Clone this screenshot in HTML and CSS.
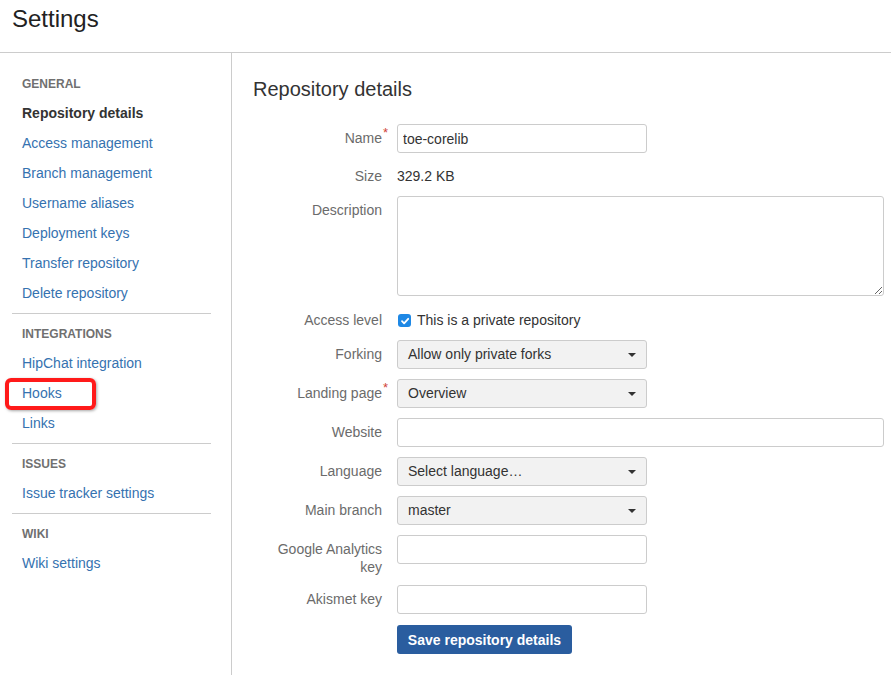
FILE: index.html
```html
<!DOCTYPE html>
<html>
<head>
<meta charset="utf-8">
<link rel="stylesheet" href="styles.css">
</head>
<body>
<header class="page-header">
  <h1>Settings</h1>
</header>
<div class="layout">
  <nav class="sidebar">
    <div class="nav-heading">GENERAL</div>
    <a class="nav-item active">Repository details</a>
    <a class="nav-item">Access management</a>
    <a class="nav-item">Branch management</a>
    <a class="nav-item">Username aliases</a>
    <a class="nav-item">Deployment keys</a>
    <a class="nav-item">Transfer repository</a>
    <a class="nav-item">Delete repository</a>
    <hr class="nav-sep">
    <div class="nav-heading">INTEGRATIONS</div>
    <a class="nav-item">HipChat integration</a>
    <a class="nav-item highlighted">Hooks<span class="highlight-box"></span></a>
    <a class="nav-item">Links</a>
    <hr class="nav-sep">
    <div class="nav-heading">ISSUES</div>
    <a class="nav-item">Issue tracker settings</a>
    <hr class="nav-sep">
    <div class="nav-heading">WIKI</div>
    <a class="nav-item">Wiki settings</a>
  </nav>
  <main class="content">
    <h2>Repository details</h2>
    <form class="form">
      <label class="lbl req">Name</label>
      <div class="field"><input class="text short" value="toe-corelib"></div>

      <label class="lbl size-lbl">Size</label>
      <div class="field value size-val">329.2 KB</div>

      <label class="lbl">Description</label>
      <div class="field"><textarea class="area"></textarea></div>

      <label class="lbl access-lbl">Access level</label>
      <div class="field value check-row">
        <span class="checkbox"><svg width="12" height="12" viewBox="0 0 12 12"><path d="M3 6.2 L5.1 8.3 L9.2 3.8" fill="none" stroke="#fff" stroke-width="1.8" stroke-linecap="round" stroke-linejoin="round"/></svg></span>
        This is a private repository
      </div>

      <label class="lbl">Forking</label>
      <div class="field"><div class="select">Allow only private forks<span class="caret"></span></div></div>

      <label class="lbl req">Landing page</label>
      <div class="field"><div class="select">Overview<span class="caret"></span></div></div>

      <label class="lbl">Website</label>
      <div class="field"><input class="text long"></div>

      <label class="lbl">Language</label>
      <div class="field"><div class="select">Select language…<span class="caret"></span></div></div>

      <label class="lbl">Main branch</label>
      <div class="field"><div class="select">master<span class="caret"></span></div></div>

      <label class="lbl ga-lbl">Google Analytics key</label>
      <div class="field"><input class="text short"></div>

      <label class="lbl">Akismet key</label>
      <div class="field"><input class="text short"></div>

      <div></div>
      <div class="field"><button type="button" class="btn">Save repository details</button></div>
    </form>
  </main>
</div>
</body>
</html>
```
FILE: styles.css
```css
* { box-sizing: border-box; }
html, body { margin: 0; padding: 0; background: #fff; }
body {
  font-family: "Liberation Sans", Arial, sans-serif;
  font-size: 14px;
  color: #333;
  height: 675px;
  overflow: hidden;
}
.page-header {
  height: 53px;
  border-bottom: 1px solid #ccc;
  padding: 4px 12px 0;
}
.page-header h1 {
  margin: 0;
  font-weight: normal;
  font-size: 24px;
  line-height: 30px;
  color: #222;
}
.layout {
  display: flex;
  height: 622px;
}
.sidebar {
  width: 232px;
  flex: none;
  border-right: 1px solid #ccc;
  padding: 19px 20px 0 12px;
  display: flex;
  flex-direction: column;
}
.nav-heading {
  height: 30px;
  line-height: 24px;
  padding-left: 10px;
  font-size: 12px;
  font-weight: bold;
  color: #707070;
}
.nav-item {
  display: block;
  position: relative;
  height: 30px;
  line-height: 22px;
  padding-left: 10px;
  color: #3572b0;
  text-decoration: none;
}
.nav-item.active { color: #333; font-weight: bold; }
.nav-sep {
  border: 0;
  border-top: 1px solid #ccc;
  margin: 1px 0 8px;
  height: 0;
}
.highlight-box {
  position: absolute;
  left: -7px;
  top: -4px;
  width: 91px;
  height: 32px;
  border: 4px solid #ff1a1a;
  border-radius: 6px;
  box-shadow: 1px 1px 3px rgba(0,0,0,0.35);
}
.content {
  flex: 1;
  padding: 23px 7px 0 21px;
}
.content h2 {
  margin: 0 0 22px;
  font-size: 20px;
  font-weight: normal;
  line-height: 26px;
  color: #333;
}
.form {
  display: grid;
  grid-template-columns: 120px 1fr;
  column-gap: 15px;
  row-gap: 10px;
  padding-left: 9px;
}
.lbl {
  text-align: right;
  color: #6b6b6b;
  padding-top: 5px;
  line-height: 18px;
  position: relative;
}
.lbl.size-lbl { padding-top: 4px; line-height: 19px; }
.lbl.access-lbl { padding-top: 5px; line-height: 19px; }
.lbl.ga-lbl { padding-top: 5px; margin-bottom: -1px; }
.lbl.req::after {
  content: "*";
  color: #d04437;
  position: absolute;
  right: -6px;
  top: 0;
  font-size: 13px;
}
.value { color: #333; }
.size-val { padding-top: 4px; line-height: 19px; }
.text {
  display: block;
  height: 29px;
  border: 1px solid #ccc;
  border-radius: 3px;
  padding: 0 5px;
  font: inherit;
  color: #333;
  background: #fff;
}
.text.short { width: 250px; }
.text.long { width: 100%; }
.area {
  display: block;
  width: 100%;
  height: 100px;
  border: 1px solid #ccc;
  border-radius: 3px;
  font: inherit;
  margin: 0;
}
.check-row {
  display: flex;
  align-items: center;
  gap: 6px;
  height: 24px;
  padding-top: 5px;
  line-height: 19px;
}
.checkbox {
  width: 13px;
  height: 13px;
  margin-left: 1px;
  border-radius: 3px;
  background: #1e88e5;
  display: inline-flex;
  align-items: center;
  justify-content: center;
}
.checkbox svg { display: block; }
.select {
  position: relative;
  width: 250px;
  height: 29px;
  line-height: 27px;
  border: 1px solid #ccc;
  border-radius: 3px;
  background: #f2f2f2;
  padding-left: 10px;
  color: #333;
}
.caret {
  position: absolute;
  right: 10px;
  top: 12px;
  width: 0;
  height: 0;
  border-left: 4px solid transparent;
  border-right: 4px solid transparent;
  border-top: 4px solid #333;
}
.btn {
  margin-top: 1px;
  width: 175px;
  height: 29px;
  border: 0;
  border-radius: 3px;
  background: #2a5d9f;
  color: #fff;
  font: bold 14px "Liberation Sans", Arial, sans-serif;
  padding: 0;
}
```
